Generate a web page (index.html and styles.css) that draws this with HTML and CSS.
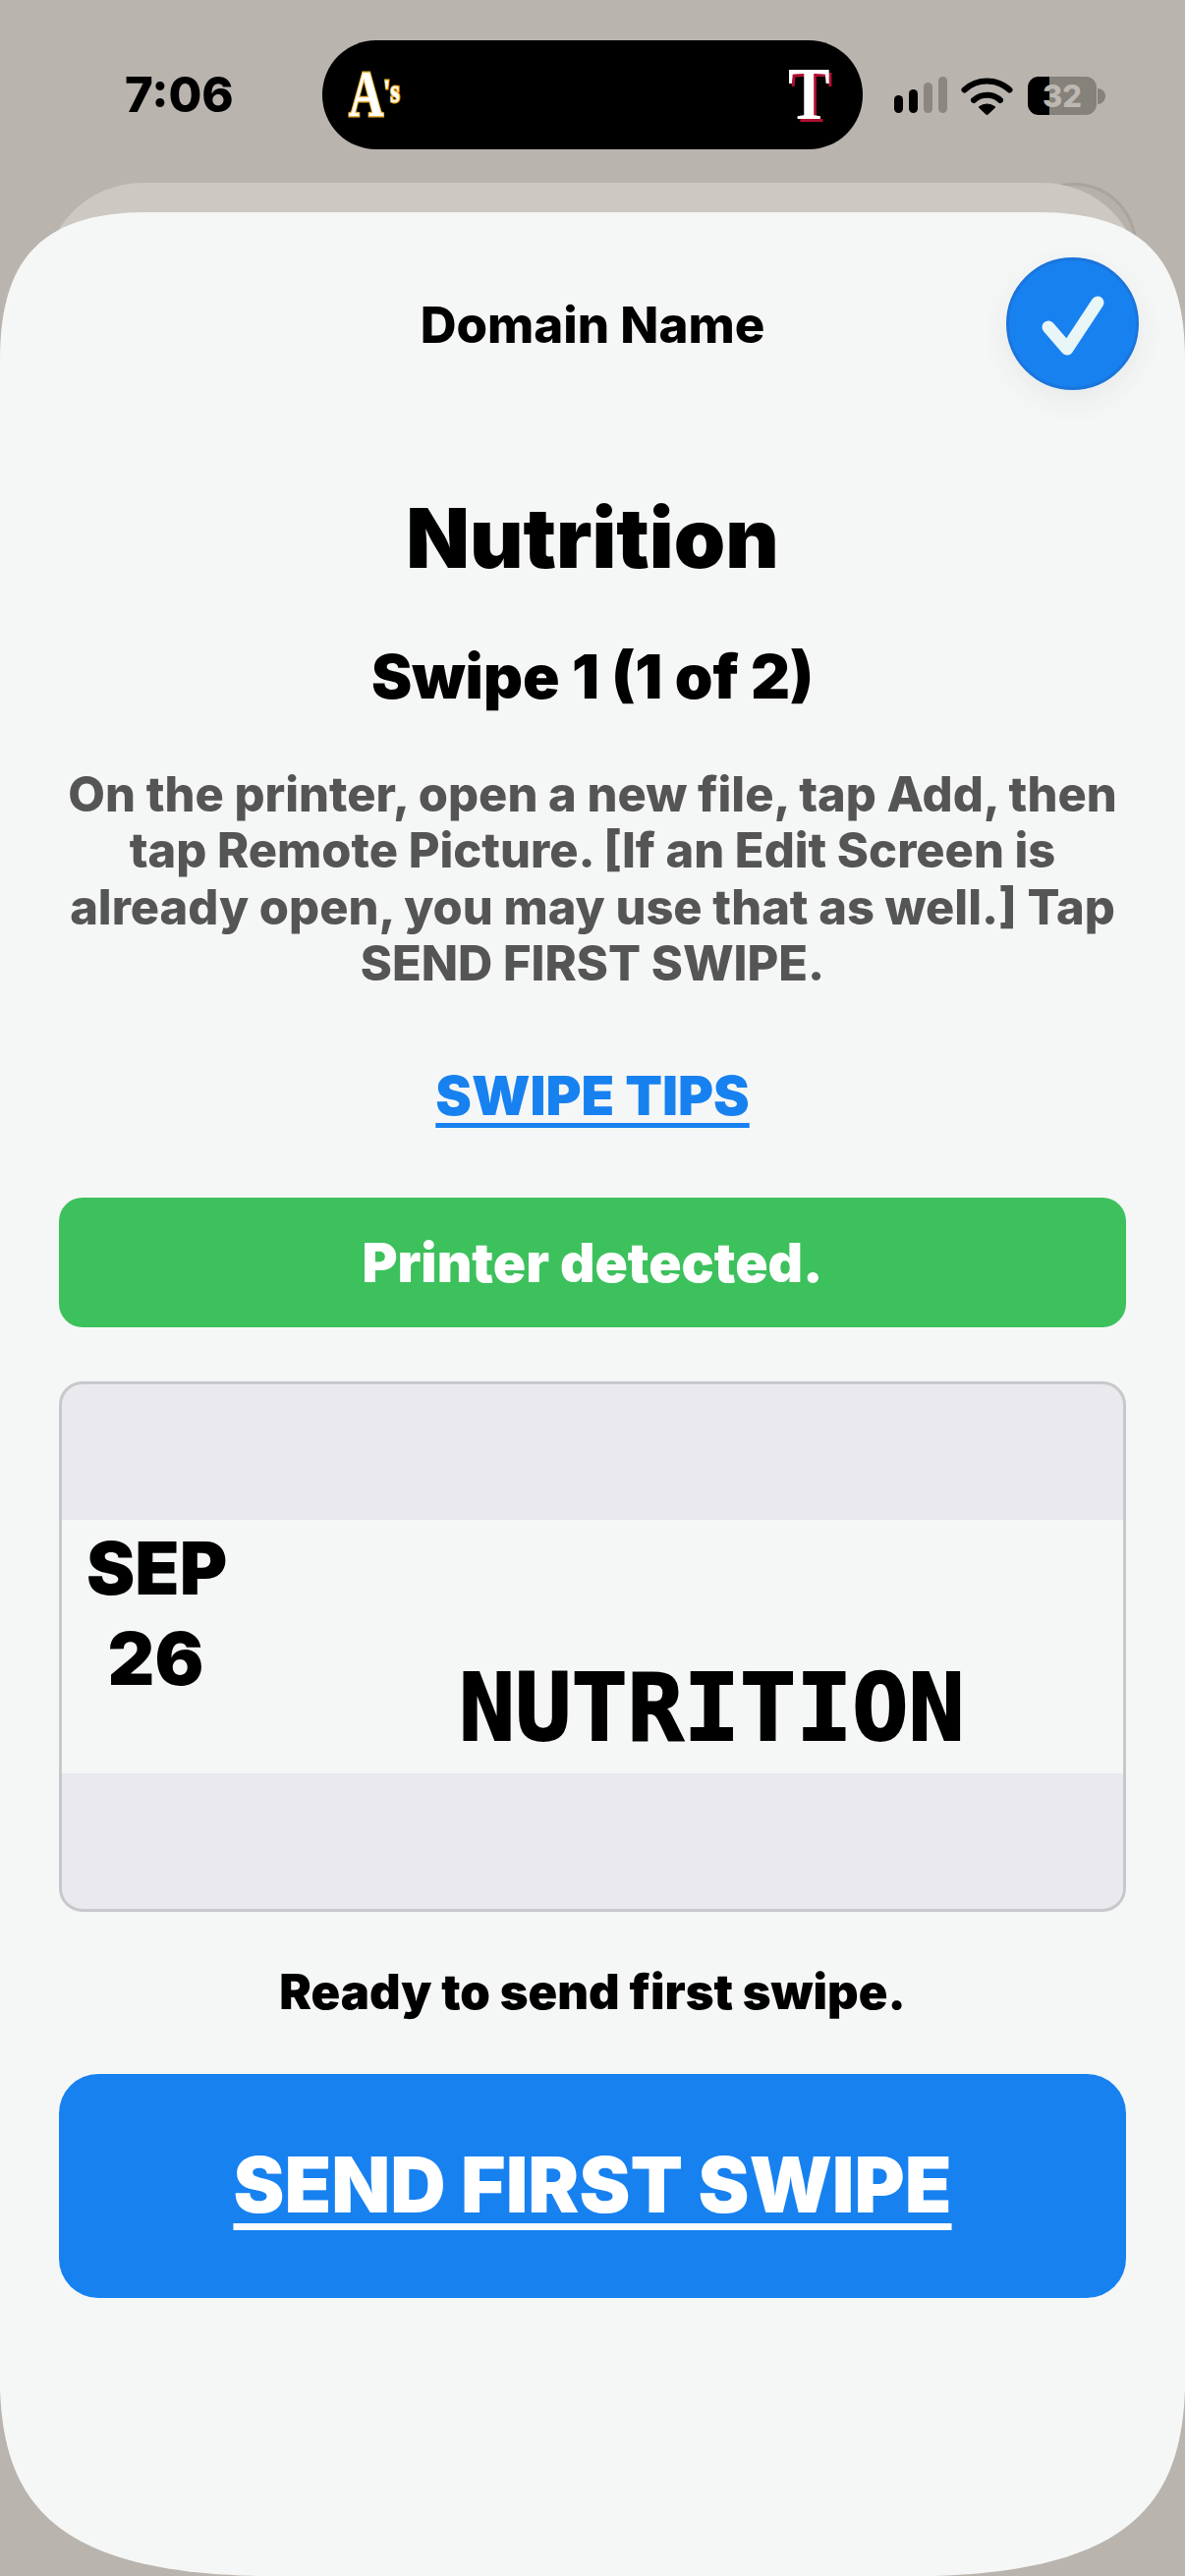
FILE: index.html
```html
<!DOCTYPE html>
<html lang="en">
<head>
    <meta charset="UTF-8">
    <meta name="viewport" content="width=device-width, initial-scale=1.0">
    <title>Nutrition Swipe</title>
    <link rel="stylesheet" href="styles.css">
</head>
<body>
    <div class="status-bar">
        <div class="time">7:06</div>
        <div class="island">
            <span class="logo-as">A<span class="logo-as-s">'s</span></span>
            <span class="logo-t">T</span>
        </div>
        <svg class="signal" width="54" height="37" viewBox="0 0 54 37">
            <rect x="0" y="19" width="9" height="18" rx="4.5" fill="#000"/>
            <rect x="15" y="13" width="9" height="24" rx="4.5" fill="#000"/>
            <rect x="30" y="6" width="9" height="31" rx="4.5" fill="#8b8780"/>
            <rect x="45" y="0" width="9" height="37" rx="4.5" fill="#8b8780"/>
        </svg>
        <svg class="wifi" width="53" height="40" viewBox="0 0 53 40">
            <path d="M3.5 14.5 A34 34 0 0 1 49.5 14.5" fill="none" stroke="#000" stroke-width="6" stroke-linecap="round"/>
            <path d="M13 25 A20 20 0 0 1 40 25" fill="none" stroke="#000" stroke-width="6" stroke-linecap="round"/>
            <path d="M26.5 40 L18 32 Q26.5 26 35 32 Z" fill="#000" stroke="#000" stroke-width="1" stroke-linejoin="round"/>
        </svg>
        <div class="battery">
            <div class="battery-body">32</div>
            <div class="battery-tip"></div>
        </div>
    </div>

    <div class="back-circle"></div>
    <div class="back-card"></div>

    <div class="sheet">
        <button class="done-btn">
            <svg width="135" height="135" viewBox="0 0 135 135">
                <path d="M43 71 L62 93 L93 46" fill="none" stroke="#e8f6f8" stroke-width="13" stroke-linecap="round" stroke-linejoin="round"/>
            </svg>
        </button>

        <div class="domain">Domain Name</div>
        <h1 class="title">Nutrition</h1>
        <h2 class="subtitle">Swipe 1 (1 of 2)</h2>
        <p class="instructions">On the printer, open a new file, tap Add, then<br>tap Remote Picture. [If an Edit Screen is<br>already open, you may use that as well.] Tap<br>SEND FIRST SWIPE.</p>
        <a class="tips" href="#">SWIPE TIPS</a>
        <div class="detected">Printer detected.</div>

        <div class="preview">
            <div class="strip">
                <div class="strip-date">
                    <div>SEP</div>
                    <div>26</div>
                </div>
                <div class="strip-name">NUTRITION</div>
            </div>
        </div>

        <div class="ready">Ready to send first swipe.</div>
        <a class="send-btn" href="#">SEND FIRST SWIPE</a>
    </div>
</body>
</html>
```

FILE: styles.css
```css
* {
    margin: 0;
    padding: 0;
    box-sizing: border-box;
}

body {
    width: 1206px;
    height: 2622px;
    overflow: hidden;
    position: relative;
    background-color: #b9b4ad;
    font-family: Inter, "Liberation Sans", sans-serif;
    color: #000;
}

.status-bar {
    height: 216px;
    padding: 41px 0 0 127px;
    display: flex;
    align-items: flex-start;
}

.time {
    width: 108px;
    height: 111px;
    margin-right: 93px;
    line-height: 111px;
    font-size: 49px;
    font-weight: 800;
    white-space: nowrap;
}

.island {
    width: 550px;
    height: 111px;
    border-radius: 55px;
    background-color: #000;
    display: flex;
    justify-content: space-between;
    align-items: center;
    padding: 0 33px 0 27px;
}

.logo-as {
    font-family: "Liberation Serif", serif;
    font-size: 68px;
    font-weight: 700;
    line-height: 68px;
    color: #fff;
    -webkit-text-stroke: 3px #e8b23a;
    paint-order: stroke fill;
    transform: scaleX(0.72);
    transform-origin: left center;
    margin-top: -6px;
    white-space: nowrap;
}

.logo-as-s {
    font-size: 34px;
    vertical-align: 14px;
}

.logo-t {
    font-family: "Liberation Serif", serif;
    font-size: 76px;
    font-weight: 700;
    line-height: 76px;
    color: #fff;
    text-shadow: 3px 3px 0 #b01030;
    transform: scaleX(0.84);
    transform-origin: right center;
    margin-top: -4px;
}

.signal {
    margin: 37px 14px 0 32px;
}

.wifi {
    margin-top: 36px;
    margin-right: 15px;
}

.battery {
    margin-top: 37px;
    display: flex;
    align-items: center;
}

.battery-body {
    width: 70px;
    height: 39px;
    border-radius: 11px;
    background: linear-gradient(to right, #000 31%, #85817b 31%);
    color: #bdb8b1;
    font-size: 31px;
    font-weight: 800;
    line-height: 39px;
    text-align: center;
}

.battery-tip {
    width: 8px;
    height: 16px;
    margin-left: 1px;
    border-radius: 0 8px 8px 0;
    background-color: #85817b;
}

/* the sheet and circle peeking out behind the front card */
.back-circle {
    position: absolute;
    top: 186px;
    left: 1029px;
    width: 128px;
    height: 128px;
    border-radius: 50%;
    background-color: #b6b1aa;
    border: 3px solid #a9a49d;
}

.back-card {
    position: absolute;
    top: 186px;
    left: 45px;
    width: 1116px;
    height: 200px;
    border-radius: 100px 100px 0 0;
    background-color: #cdc8c2;
}

.sheet {
    position: relative;
    height: 2406px;
    padding: 85px 60px 0;
    /* iOS sheet corners are not circular, so border-radius can't do them */
    clip-path: path("M0 150 C0 50 40 0 150 0 L1056 0 C1166 0 1206 50 1206 150 L1206 2216 C1202 2326 1156 2404 936 2406 L270 2406 C50 2404 4 2326 0 2216 Z");
    background-color: #f5f7f6;
    text-align: center;
}

.done-btn {
    position: absolute;
    top: 46px;
    left: 1024px;
    width: 135px;
    height: 135px;
    border: 3px solid #1a75dc;
    border-radius: 50%;
    background-color: #1781f0;
    box-shadow: 0 10px 30px rgba(60, 50, 70, 0.07);
    display: flex;
    justify-content: center;
    align-items: center;
}

.done-btn svg {
    flex: none;
}

.domain {
    font-size: 51px;
    font-weight: 800;
    line-height: 60px;
}

.title {
    margin-top: 137px;
    font-size: 84px;
    font-weight: 900;
    line-height: 100px;
}

.subtitle {
    margin-top: 56px;
    font-size: 62px;
    font-weight: 900;
    line-height: 70px;
}

.instructions {
    margin-top: 56px;
    margin-left: -20px;
    margin-right: -20px;
    font-size: 48.8px;
    font-weight: 800;
    line-height: 57.3px;
    color: #555;
}

.tips {
    display: block;
    margin-top: 76px;
    font-size: 55px;
    font-weight: 900;
    line-height: 60px;
    color: #1781f0;
    text-decoration-thickness: 5px;
    text-underline-offset: 8px;
}

.detected {
    margin-top: 74px;
    height: 132px;
    border-radius: 24px;
    background-color: #3dc15c;
    color: #fff;
    font-size: 55px;
    font-weight: 900;
    line-height: 132px;
}

.preview {
    margin-top: 55px;
    height: 540px;
    border: 3px solid #c8c8cc;
    border-radius: 24px;
    background-color: #e9e9ee;
    display: flex;
    flex-direction: column;
    justify-content: center;
}

.strip {
    height: 258px;
    padding: 3px 0 0 25px;
    display: flex;
    background-color: #f5f7f6;
}

.strip-date {
    width: 141px;
    font-size: 74px;
    font-weight: 900;
    line-height: 92px;
}

.strip-name {
    align-self: flex-end;
    margin: 0 0 20px 238px;
    font-family: "DejaVu Sans Mono", monospace;
    font-size: 95px;
    font-weight: 700;
    line-height: 94px;
    -webkit-text-stroke: 2px #000;
}

.ready {
    margin-top: 57px;
    font-size: 49px;
    font-weight: 900;
    line-height: 50px;
}

.send-btn {
    display: block;
    margin-top: 58px;
    height: 228px;
    border-radius: 40px;
    background-color: #1781f0;
    color: #fff;
    font-size: 78px;
    font-weight: 900;
    line-height: 226px;
    text-decoration-thickness: 7px;
    text-underline-offset: 11px;
}
```
